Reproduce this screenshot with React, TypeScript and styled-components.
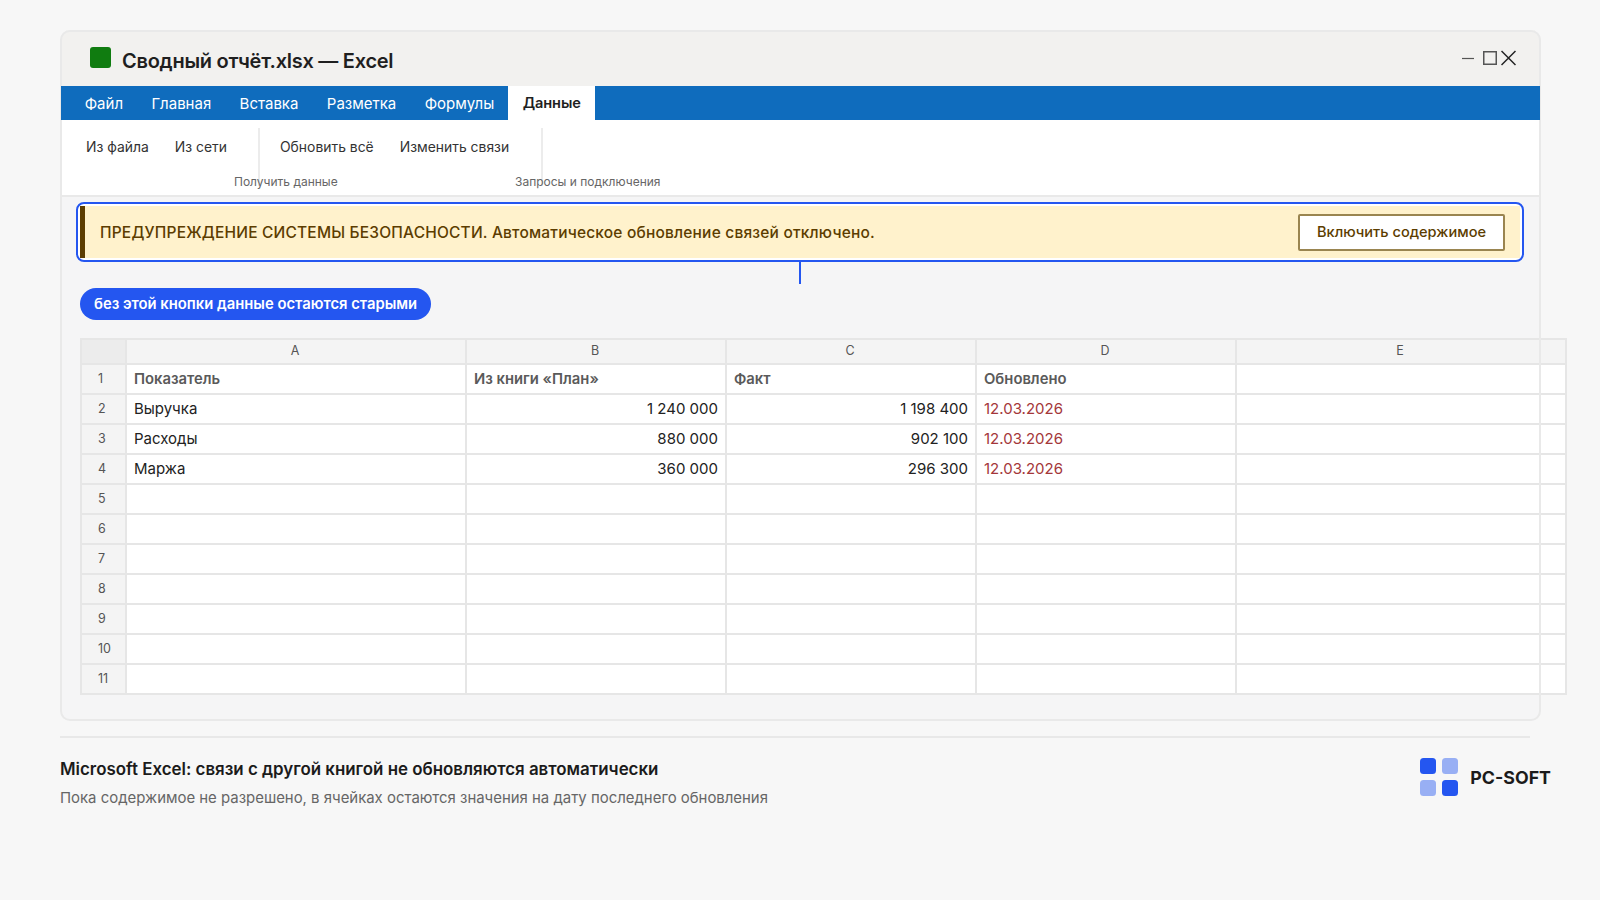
import styled, { createGlobalStyle } from "styled-components";

const GlobalStyle = createGlobalStyle`
  html, body {
    margin: 0;
    padding: 0;
    background: #f7f7f7;
    overflow: hidden;
  }
  * { box-sizing: border-box; }
`;

const menuItems = ["Файл", "Главная", "Вставка", "Разметка", "Формулы", "Данные"];
const columns = ["A", "B", "C", "D", "E"];
const rows = [
  ["Показатель", "Из книги «План»", "Факт", "Обновлено", ""],
  ["Выручка", "1 240 000", "1 198 400", "12.03.2026", ""],
  ["Расходы", "880 000", "902 100", "12.03.2026", ""],
  ["Маржа", "360 000", "296 300", "12.03.2026", ""],
  ...Array.from({ length: 7 }, () => ["", "", "", "", ""]),
];

export default function App() {
  return (
    <>
      <GlobalStyle />
      <Page>
        <Window>
          <TitleBar>
            <AppIcon />
            <Title>Сводный отчёт.xlsx — Excel</Title>
            <WindowControls>
              <MinimizeIcon width="12" height="16" viewBox="0 0 12 16">
                <path d="M0 8.5h12" stroke="#555" strokeWidth="1.2" />
              </MinimizeIcon>
              <svg width="14" height="16" viewBox="0 0 14 16">
                <rect x="0.75" y="1.75" width="12.5" height="12.5" fill="none" stroke="#555" strokeWidth="1.5" />
              </svg>
              <svg width="15" height="16" viewBox="0 0 15 16">
                <path d="M0.5 1l14 14M14.5 1l-14 14" stroke="#222" strokeWidth="1.5" />
              </svg>
            </WindowControls>
          </TitleBar>
          <MenuBar>
            {menuItems.map((item) => (
              <MenuItem key={item} $active={item === "Данные"}>
                {item}
              </MenuItem>
            ))}
          </MenuBar>
          <Ribbon>
            <RibbonGroup $width={200} $inset={26}>
              <RibbonButtons>
                <RibbonButton>Из файла</RibbonButton>
                <RibbonButton>Из сети</RibbonButton>
              </RibbonButtons>
              <GroupLabel $left={174}>Получить данные</GroupLabel>
            </RibbonGroup>
            <RibbonGroup $width={283} $inset={20}>
              <RibbonButtons>
                <RibbonButton>Обновить всё</RibbonButton>
                <RibbonButton>Изменить связи</RibbonButton>
              </RibbonButtons>
              <GroupLabel $left={255}>Запросы и подключения</GroupLabel>
            </RibbonGroup>
          </Ribbon>
          <Content>
            <AlertFrame>
              <Alert>
                <AlertText>
                  ПРЕДУПРЕЖДЕНИЕ СИСТЕМЫ БЕЗОПАСНОСТИ. Автоматическое обновление связей отключено.
                </AlertText>
                <EnableButton>Включить содержимое</EnableButton>
              </Alert>
            </AlertFrame>
            <Connector />
            <Pill>без этой кнопки данные остаются старыми</Pill>
            <Sheet>
              <colgroup>
                <col width="45" />
                <col width="340" />
                <col width="260" />
                <col width="250" />
                <col width="260" />
                <col width="330" />
              </colgroup>
              <thead>
                <tr>
                  <Corner />
                  {columns.map((col) => (
                    <ColumnHead key={col}>{col}</ColumnHead>
                  ))}
                </tr>
              </thead>
              <tbody>
                {rows.map((row, i) => (
                  <tr key={i}>
                    <RowHead>{i + 1}</RowHead>
                    {row.map((value, j) => (
                      <Cell key={j} $header={i === 0} $number={i > 0 && (j === 1 || j === 2)} $stale={i > 0 && j === 3}>
                        {value}
                      </Cell>
                    ))}
                  </tr>
                ))}
              </tbody>
            </Sheet>
          </Content>
        </Window>
        <Footer>
          <FooterText>
            <FooterTitle>Microsoft Excel: связи с другой книгой не обновляются автоматически</FooterTitle>
            <FooterSub>Пока содержимое не разрешено, в ячейках остаются значения на дату последнего обновления</FooterSub>
          </FooterText>
          <Brand>
            <svg width="38" height="38" viewBox="0 0 38 38">
              <rect x="0" y="0" width="16" height="16" rx="3.5" fill="#2456f0" />
              <rect x="22" y="0" width="16" height="16" rx="3.5" fill="#2456f0" opacity="0.45" />
              <rect x="0" y="22" width="16" height="16" rx="3.5" fill="#2456f0" opacity="0.45" />
              <rect x="22" y="22" width="16" height="16" rx="3.5" fill="#2456f0" />
            </svg>
            <BrandName>PC-SOFT</BrandName>
          </Brand>
        </Footer>
      </Page>
    </>
  );
}

const Page = styled.div`
  width: 1600px;
  height: 900px;
  padding: 30px 0 0 60px;
  font-family: Inter, "Liberation Sans", sans-serif;
  color: #1b1b1b;
`;

const Window = styled.div`
  position: relative;
  width: 1481px;
  height: 691px;
  border-radius: 10px;
  background: #f5f5f6;

  &::after {
    content: "";
    position: absolute;
    inset: 0;
    border: 2px solid #e9e9e9;
    border-radius: 10px;
    pointer-events: none;
  }
`;

const TitleBar = styled.div`
  display: flex;
  align-items: center;
  height: 56px;
  padding: 0 25px 0 30px;
  background: #f2f1ef;
  border-radius: 10px 10px 0 0;
`;

const AppIcon = styled.div`
  width: 21px;
  height: 21px;
  margin: -1px 11px 0 0;
  border-radius: 3px;
  background: #107c10;
`;

const Title = styled.div`
  margin-top: 6px;
  font-size: 20px;
  font-weight: 600;
  letter-spacing: -0.26px;
  color: #1f1f1f;
`;

const WindowControls = styled.div`
  display: flex;
  align-items: center;
  gap: 4px;
  margin-left: auto;
`;

const MinimizeIcon = styled.svg`
  margin-right: 5px;
`;

const MenuBar = styled.div`
  position: relative;
  z-index: 1;
  display: flex;
  height: 34px;
  margin: 0 1px;
  padding-left: 9.5px;
  background: #0f6cbd;
`;

const MenuItem = styled.div<{ $active?: boolean }>`
  display: flex;
  align-items: center;
  padding: 0 14.2px;
  font-size: ${(p) => (p.$active ? "14.6px" : "15px")};
  font-weight: ${(p) => (p.$active ? 600 : 400)};
  letter-spacing: ${(p) => (p.$active ? "-0.1px" : "0")};
  color: ${(p) => (p.$active ? "#1f1f1f" : "#fff")};
  background: ${(p) => (p.$active ? "#fff" : "transparent")};
`;

const Ribbon = styled.div`
  display: flex;
  height: 77px;
  background: #fff;
  border-bottom: 2px solid #e9e9e9;
`;

const RibbonGroup = styled.div<{ $width: number; $inset: number }>`
  position: relative;
  width: ${(p) => p.$width}px;
  height: 58px;
  margin-top: 8px;
  padding-left: ${(p) => p.$inset}px;
  border-right: 2px solid #ececec;
`;

const RibbonButtons = styled.div`
  display: flex;
  gap: 26px;
  padding-top: 11px;
`;

const RibbonButton = styled.div`
  font-size: 13.9px;
  color: #333;
`;

const GroupLabel = styled.div<{ $left: number }>`
  position: absolute;
  top: 46px;
  left: ${(p) => p.$left}px;
  font-size: 12px;
  white-space: nowrap;
  color: #666;
`;

const Content = styled.div`
  padding: 5px 0 0 16px;
`;

const AlertFrame = styled.div`
  width: 1448px;
  height: 60px;
  padding: 2px;
  border: 2px solid #2456f0;
  border-radius: 8px;
  background: #fff;
`;

const Alert = styled.div`
  display: flex;
  align-items: center;
  justify-content: space-between;
  height: 100%;
  padding: 0 15px 0 15px;
  border-left: 5px solid #5c3d00;
  background: #fff2cc;
`;

const AlertText = styled.div`
  font-size: 15.5px;
  font-weight: 500;
  letter-spacing: 0.19px;
  color: #5c3d00;
`;

const EnableButton = styled.button`
  width: 207px;
  height: 37px;
  padding: 0;
  border: 2px solid #9a8550;
  border-radius: 2px;
  background: #fff;
  font: 500 14.6px Inter, "Liberation Sans", sans-serif;
  color: #5c3d00;
`;

const Connector = styled.div`
  width: 2px;
  height: 22px;
  margin-left: 723px;
  background: #2456f0;
`;

const Pill = styled.div`
  display: flex;
  align-items: center;
  width: 351px;
  height: 32px;
  margin: 4px 0 18px 4px;
  padding-left: 14px;
  border-radius: 16px;
  background: #2456f0;
  font-size: 14.8px;
  font-weight: 600;
  white-space: nowrap;
  color: #fff;
`;

const Sheet = styled.table`
  width: 1485px;
  margin-left: 4px;
  border-collapse: collapse;
  table-layout: fixed;
  background: #fff;

  th, td {
    border: 2px solid #e6e6e6;
    padding: 0 0 2px;
  }
`;

const Corner = styled.th`
  height: 25px;
  background: #ececec;
`;

const ColumnHead = styled.th`
  height: 25px;
  background: #f4f4f4;
  font-size: 12.5px;
  font-weight: 400;
  color: #555;

  && {
    padding-right: 2px;
  }
`;

const RowHead = styled.td`
  height: 30px;
  background: #f4f4f4;
  font-size: 12.5px;
  color: #555;

  && {
    padding-left: 16px;
  }
`;

const Cell = styled.td<{ $header?: boolean; $number?: boolean; $stale?: boolean }>`
  height: 30px;
  font-size: ${(p) => (p.$header ? "14.8px" : "15px")};
  font-weight: ${(p) => (p.$header ? 600 : 400)};
  text-align: ${(p) => (p.$number ? "right" : "left")};
  color: ${(p) => (p.$header ? "#5a5a5a" : p.$stale ? "#a4373a" : "#222")};

  && {
    padding: ${(p) => (p.$header ? "0 7px 0" : "0 7px 2px")} 7px;
  }
`;

const Footer = styled.div`
  display: flex;
  align-items: center;
  justify-content: space-between;
  width: 1470px;
  margin-top: 15px;
  padding-top: 21px;
  border-top: 2px solid #e8e8e8;
`;

const FooterText = styled.div`
  display: flex;
  flex-direction: column;
  gap: 10px;
`;

const FooterTitle = styled.div`
  font-size: 16.9px;
  font-weight: 600;
  color: #1b1b1b;
`;

const FooterSub = styled.div`
  font-size: 14.93px;
  color: #666;
`;

const Brand = styled.div`
  display: flex;
  align-items: center;
  gap: 12px;
  margin: -12px -21px 0 0;
`;

const BrandName = styled.div`
  font-size: 17.8px;
  font-weight: 700;
  color: #1b1b1b;
`;
